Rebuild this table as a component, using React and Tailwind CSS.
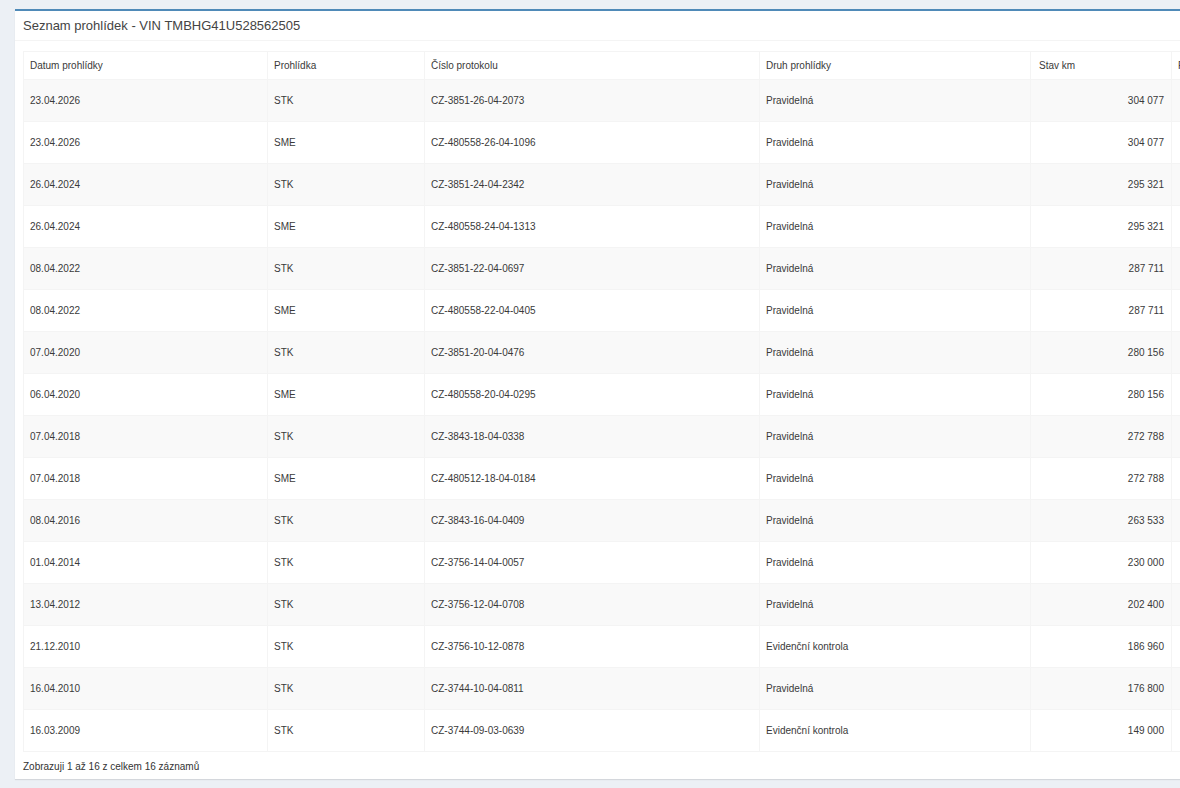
import React from 'react';

const rows = [
  ['23.04.2026', 'STK', 'CZ-3851-26-04-2073', 'Pravidelná', '304 077'],
  ['23.04.2026', 'SME', 'CZ-480558-26-04-1096', 'Pravidelná', '304 077'],
  ['26.04.2024', 'STK', 'CZ-3851-24-04-2342', 'Pravidelná', '295 321'],
  ['26.04.2024', 'SME', 'CZ-480558-24-04-1313', 'Pravidelná', '295 321'],
  ['08.04.2022', 'STK', 'CZ-3851-22-04-0697', 'Pravidelná', '287 711'],
  ['08.04.2022', 'SME', 'CZ-480558-22-04-0405', 'Pravidelná', '287 711'],
  ['07.04.2020', 'STK', 'CZ-3851-20-04-0476', 'Pravidelná', '280 156'],
  ['06.04.2020', 'SME', 'CZ-480558-20-04-0295', 'Pravidelná', '280 156'],
  ['07.04.2018', 'STK', 'CZ-3843-18-04-0338', 'Pravidelná', '272 788'],
  ['07.04.2018', 'SME', 'CZ-480512-18-04-0184', 'Pravidelná', '272 788'],
  ['08.04.2016', 'STK', 'CZ-3843-16-04-0409', 'Pravidelná', '263 533'],
  ['01.04.2014', 'STK', 'CZ-3756-14-04-0057', 'Pravidelná', '230 000'],
  ['13.04.2012', 'STK', 'CZ-3756-12-04-0708', 'Pravidelná', '202 400'],
  ['21.12.2010', 'STK', 'CZ-3756-10-12-0878', 'Evidenční kontrola', '186 960'],
  ['16.04.2010', 'STK', 'CZ-3744-10-04-0811', 'Pravidelná', '176 800'],
  ['16.03.2009', 'STK', 'CZ-3744-09-03-0639', 'Evidenční kontrola', '149 000'],
];

export default function App() {
  return (
    <div className="w-[1180px] h-[788px] overflow-hidden bg-[#ecf0f5] pt-[9px] pl-[15px] font-['Liberation_Sans',Arial,sans-serif]">
      <div className="w-[1260px] bg-white border-t-2 border-[#4f8ab8] shadow-[0_1px_1px_rgba(0,0,0,0.1)]">
        {/* Header */}
        <div className="h-[30px] px-2 flex items-center border-b border-[#f4f4f4]">
          <h3 className="text-[13px] text-[#444]">Seznam prohlídek - VIN TMBHG41U528562505</h3>
        </div>

        {/* Body */}
        <div className="px-2 pt-[10px] pb-[5px]">
          <table className="table-fixed border-collapse border border-[#f4f4f4] text-[10px] text-[#3a3a3a] w-[1240px]">
            <colgroup>
              <col className="w-[244px]" />
              <col className="w-[157px]" />
              <col className="w-[335px]" />
              <col className="w-[271px]" />
              <col className="w-[141px]" />
              <col className="w-[92px]" />
            </colgroup>
            <thead>
              <tr className="h-[28px] bg-white">
                <th className="text-left font-normal px-[6px] border border-[#f4f4f4]">Datum prohlídky</th>
                <th className="text-left font-normal px-[6px] border border-[#f4f4f4]">Prohlídka</th>
                <th className="text-left font-normal px-[6px] border border-[#f4f4f4]">Číslo protokolu</th>
                <th className="text-left font-normal px-[6px] border border-[#f4f4f4]">Druh prohlídky</th>
                <th className="text-left font-normal px-[8px] border border-[#f4f4f4]">Stav km</th>
                <th className="text-left font-normal px-[6px] border border-[#f4f4f4]">Poznámka</th>
              </tr>
            </thead>
            <tbody>
              {rows.map((r, i) => (
                <tr key={i} className={`h-[42px] ${i % 2 === 0 ? 'bg-[#f9f9f9]' : 'bg-white'}`}>
                  <td className="px-[6px] border border-[#f4f4f4]">{r[0]}</td>
                  <td className="px-[6px] border border-[#f4f4f4]">{r[1]}</td>
                  <td className="px-[6px] border border-[#f4f4f4]">{r[2]}</td>
                  <td className="px-[6px] border border-[#f4f4f4]">{r[3]}</td>
                  <td className="px-[7px] border border-[#f4f4f4] text-right">{r[4]}</td>
                  <td className="px-[6px] border border-[#f4f4f4]"></td>
                </tr>
              ))}
            </tbody>
          </table>
          <div className="pt-[7px] text-[10px] text-[#333]">Zobrazuji 1 až 16 z celkem 16 záznamů</div>
        </div>
      </div>
    </div>
  );
}
